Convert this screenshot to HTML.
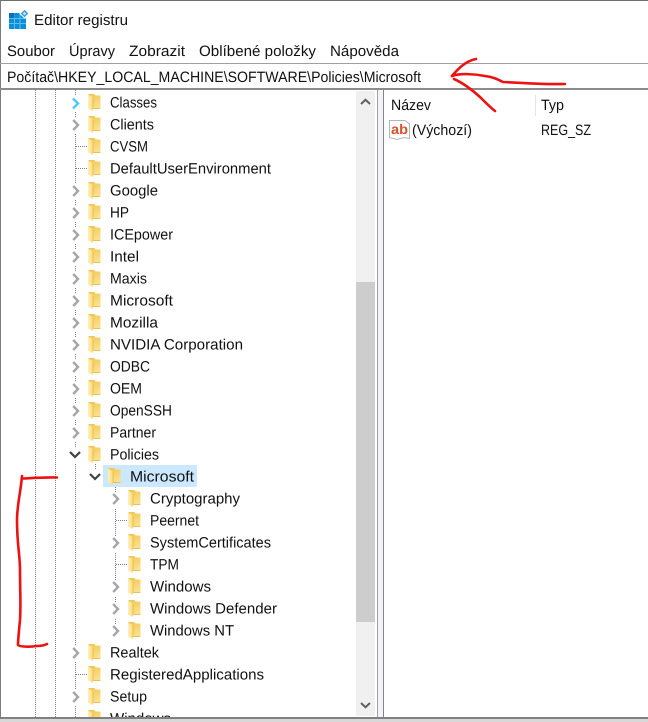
<!DOCTYPE html>
<html><head><meta charset="utf-8"><style>
html,body{margin:0;padding:0;background:#fff;width:648px;height:722px;overflow:hidden}
svg{display:block}
text{font-family:"Liberation Sans",sans-serif;font-size:15px;fill:#111;text-rendering:geometricPrecision}
</style></head><body>
<svg width="648" height="722" viewBox="0 0 648 722" xmlns="http://www.w3.org/2000/svg">
<defs>
<linearGradient id="fg" x1="0" y1="0" x2="0.4" y2="1"><stop offset="0" stop-color="#f0c54e"/><stop offset="1" stop-color="#fbdf8a"/></linearGradient>
<linearGradient id="fl" x1="0" y1="0" x2="1" y2="0"><stop offset="0" stop-color="#fff0b8"/><stop offset="1" stop-color="#fbdc7e"/></linearGradient>
<symbol id="f" width="13" height="18" viewBox="0 0 13 18" overflow="visible">
<path d="M0.500 0H6.500L7.500 1.500H12.500V14.500H0.500Z" fill="url(#fg)"/>
<path d="M0 0.500L5 3.500V17L0 14.500Z" fill="url(#fl)"/>
<path d="M5 3.500V14.500H12.500" fill="none" stroke="#e4b640" stroke-width=".7"/>
</symbol>
<symbol id="cr" width="9" height="12" viewBox="0 0 9 12"><path d="M1.200 1L6 6L1.200 11" fill="none" stroke="#a6a6a6" stroke-width="2.400"/></symbol>
</defs>
<rect x="0" y="0" width="648" height="1" fill="#6e6e6e"/>
<rect x="0" y="0" width="1" height="718" fill="#7a7a7a"/>

<!-- title -->
<g>
<rect x="9" y="13" width="17" height="16" fill="#0a8fd8"/>
<path d="M9 18.500H26M9 23.500H26M14.500 13V29M20 13V29" stroke="#5cc0ef" stroke-width="1"/>
<rect x="9" y="13" width="5.500" height="5" fill="#0b6fc0"/>
<path d="M24.500 9L29 13.500L24.500 18L20 13.500Z" fill="#3f9ed8" stroke="#fff" stroke-width="1"/>
<circle cx="24.500" cy="13.500" r="1.300" fill="#d8f0fb"/>
</g>
<text x="34" y="25" textLength="94" lengthAdjust="spacingAndGlyphs">Editor registru</text>
<text x="7" y="56" textLength="48" lengthAdjust="spacingAndGlyphs">Soubor</text>
<text x="69" y="56" textLength="46" lengthAdjust="spacingAndGlyphs">Úpravy</text>
<text x="129" y="56" textLength="56" lengthAdjust="spacingAndGlyphs">Zobrazit</text>
<text x="199" y="56" textLength="117" lengthAdjust="spacingAndGlyphs">Oblíbené položky</text>
<text x="330" y="56" textLength="69" lengthAdjust="spacingAndGlyphs">Nápověda</text>

<!-- address -->
<rect x="0" y="63" width="648" height="1" fill="#a0a0a0"/>
<rect x="0" y="88" width="648" height="2" fill="#8c8c8c"/>
<text x="7" y="82" textLength="414" lengthAdjust="spacingAndGlyphs">Počítač\HKEY_LOCAL_MACHINE\SOFTWARE\Policies\Microsoft</text>

<!-- dotted tree lines -->
<g stroke="#7f7f7f" stroke-width="1" stroke-dasharray="1 1" fill="none" shape-rendering="crispEdges">
<path d="M35.500 90V717M55.500 90V717M75.500 90V717"/>
<path d="M95.500 464V476M115.500 487V630"/>
<path d="M76 146.500H87M76 168.500H87M76 674.500H87M116 520.500H127M116 564.500H127"/>
</g>

<!-- white gaps behind chevrons -->
<g fill="#fff">
<rect x="70" y="96" width="12" height="16"/><rect x="70" y="118" width="12" height="16"/>
<rect x="70" y="184" width="12" height="16"/><rect x="70" y="206" width="12" height="16"/>
<rect x="70" y="228" width="12" height="16"/><rect x="70" y="250" width="12" height="16"/>
<rect x="70" y="272" width="12" height="16"/><rect x="70" y="294" width="12" height="16"/>
<rect x="70" y="316" width="12" height="16"/><rect x="70" y="338" width="12" height="16"/>
<rect x="70" y="360" width="12" height="16"/><rect x="70" y="382" width="12" height="16"/>
<rect x="70" y="404" width="12" height="16"/><rect x="70" y="426" width="12" height="16"/>
<rect x="70" y="448" width="12" height="16"/><rect x="70" y="646" width="12" height="16"/>
<rect x="70" y="690" width="12" height="16"/>
<rect x="90" y="470" width="12" height="16"/>
<rect x="110" y="492" width="12" height="16"/><rect x="110" y="536" width="12" height="16"/>
<rect x="110" y="580" width="12" height="16"/><rect x="110" y="602" width="12" height="16"/>
<rect x="110" y="624" width="12" height="16"/>
</g>

<!-- selection -->
<rect x="103" y="465" width="94" height="22" fill="#cce8ff"/>

<!-- chevrons -->
<path d="M73 98.500L78 103.500L73 108.500" fill="none" stroke="#4dc8f5" stroke-width="2.400"/>
<use href="#cr" x="72" y="119"/><use href="#cr" x="72" y="185"/><use href="#cr" x="72" y="207"/>
<use href="#cr" x="72" y="229"/><use href="#cr" x="72" y="251"/><use href="#cr" x="72" y="273"/>
<use href="#cr" x="72" y="295"/><use href="#cr" x="72" y="317"/><use href="#cr" x="72" y="339"/>
<use href="#cr" x="72" y="361"/><use href="#cr" x="72" y="383"/><use href="#cr" x="72" y="405"/>
<use href="#cr" x="72" y="427"/><use href="#cr" x="72" y="647"/><use href="#cr" x="72" y="691"/>
<use href="#cr" x="112" y="493"/><use href="#cr" x="112" y="537"/><use href="#cr" x="112" y="581"/>
<use href="#cr" x="112" y="603"/><use href="#cr" x="112" y="625"/>
<path d="M70 452L75 457L80 452" fill="none" stroke="#404040" stroke-width="2.200"/>
<path d="M90 474L95 479L100 474" fill="none" stroke="#404040" stroke-width="2.200"/>

<!-- folders -->
<use href="#f" x="88" y="94"/><use href="#f" x="88" y="116"/><use href="#f" x="88" y="138"/>
<use href="#f" x="88" y="160"/><use href="#f" x="88" y="182"/><use href="#f" x="88" y="204"/>
<use href="#f" x="88" y="226"/><use href="#f" x="88" y="248"/><use href="#f" x="88" y="270"/>
<use href="#f" x="88" y="292"/><use href="#f" x="88" y="314"/><use href="#f" x="88" y="336"/>
<use href="#f" x="88" y="358"/><use href="#f" x="88" y="380"/><use href="#f" x="88" y="402"/>
<use href="#f" x="88" y="424"/><use href="#f" x="88" y="446"/>
<use href="#f" x="108" y="468"/>
<use href="#f" x="128" y="490"/><use href="#f" x="128" y="512"/><use href="#f" x="128" y="534"/>
<use href="#f" x="128" y="556"/><use href="#f" x="128" y="578"/><use href="#f" x="128" y="600"/>
<use href="#f" x="128" y="622"/>
<use href="#f" x="88" y="644"/><use href="#f" x="88" y="666"/><use href="#f" x="88" y="688"/>
<use href="#f" x="88" y="710"/>

<!-- tree labels -->
<text x="110" y="107.500" textLength="47" lengthAdjust="spacingAndGlyphs">Classes</text>
<text x="110" y="129.500" textLength="44" lengthAdjust="spacingAndGlyphs">Clients</text>
<text x="110" y="151.500" textLength="38" lengthAdjust="spacingAndGlyphs">CVSM</text>
<text x="110" y="173.500" textLength="161" lengthAdjust="spacingAndGlyphs">DefaultUserEnvironment</text>
<text x="110" y="195.500" textLength="48" lengthAdjust="spacingAndGlyphs">Google</text>
<text x="110" y="217.500" textLength="19" lengthAdjust="spacingAndGlyphs">HP</text>
<text x="110" y="239.500" textLength="63" lengthAdjust="spacingAndGlyphs">ICEpower</text>
<text x="110" y="261.500" textLength="29" lengthAdjust="spacingAndGlyphs">Intel</text>
<text x="110" y="283.500" textLength="37" lengthAdjust="spacingAndGlyphs">Maxis</text>
<text x="110" y="305.500" textLength="63" lengthAdjust="spacingAndGlyphs">Microsoft</text>
<text x="110" y="327.500" textLength="48" lengthAdjust="spacingAndGlyphs">Mozilla</text>
<text x="110" y="349.500" textLength="133" lengthAdjust="spacingAndGlyphs">NVIDIA Corporation</text>
<text x="110" y="371.500" textLength="40" lengthAdjust="spacingAndGlyphs">ODBC</text>
<text x="110" y="393.500" textLength="32" lengthAdjust="spacingAndGlyphs">OEM</text>
<text x="110" y="415.500" textLength="62" lengthAdjust="spacingAndGlyphs">OpenSSH</text>
<text x="110" y="437.500" textLength="46" lengthAdjust="spacingAndGlyphs">Partner</text>
<text x="110" y="459.500" textLength="49" lengthAdjust="spacingAndGlyphs">Policies</text>
<text x="130" y="481.500" textLength="64" lengthAdjust="spacingAndGlyphs">Microsoft</text>
<text x="150" y="503.500" textLength="90" lengthAdjust="spacingAndGlyphs">Cryptography</text>
<text x="150" y="525.500" textLength="49" lengthAdjust="spacingAndGlyphs">Peernet</text>
<text x="150" y="547.500" textLength="121" lengthAdjust="spacingAndGlyphs">SystemCertificates</text>
<text x="150" y="569.500" textLength="29" lengthAdjust="spacingAndGlyphs">TPM</text>
<text x="150" y="591.500" textLength="61" lengthAdjust="spacingAndGlyphs">Windows</text>
<text x="150" y="613.500" textLength="127" lengthAdjust="spacingAndGlyphs">Windows Defender</text>
<text x="150" y="635.500" textLength="84" lengthAdjust="spacingAndGlyphs">Windows NT</text>
<text x="110" y="657.500" textLength="49" lengthAdjust="spacingAndGlyphs">Realtek</text>
<text x="110" y="679.500" textLength="154" lengthAdjust="spacingAndGlyphs">RegisteredApplications</text>
<text x="110" y="701.500" textLength="37" lengthAdjust="spacingAndGlyphs">Setup</text>
<text x="110" y="723.500" textLength="61" lengthAdjust="spacingAndGlyphs">Windows</text>

<!-- scrollbar -->
<rect x="356" y="91" width="19" height="625" fill="#f0f0f0"/>
<rect x="356" y="282" width="19" height="340" fill="#cdcdcd"/>
<path d="M361 104L365.500 99.800L370 104" fill="none" stroke="#606060" stroke-width="2"/>
<path d="M361 703L365.500 707.200L370 703" fill="none" stroke="#606060" stroke-width="2"/>

<!-- splitter -->
<rect x="377" y="90" width="6" height="627" fill="#f4f4f8"/>
<rect x="377" y="90" width="1" height="627" fill="#a0a0a8"/>
<rect x="383" y="90" width="1" height="627" fill="#85858c"/>

<!-- right pane -->
<text x="391" y="110" textLength="40" lengthAdjust="spacingAndGlyphs">Název</text>
<text x="541" y="110" textLength="23" lengthAdjust="spacingAndGlyphs">Typ</text>
<rect x="535" y="95" width="1" height="21" fill="#e5e5e5"/>
<path d="M389.500 120.500H405L409.500 124V138.500L404 137.500L397 139.500L389.500 137.500Z" fill="#fff" stroke="#b5b5b5"/>
<text x="391" y="134" textLength="17" lengthAdjust="spacingAndGlyphs" style="font-size:14px;font-weight:bold;fill:#d9532c">ab</text>
<text x="412" y="135" textLength="60" lengthAdjust="spacingAndGlyphs">(Výchozí)</text>
<text x="541" y="135" textLength="50" lengthAdjust="spacingAndGlyphs">REG_SZ</text>

<!-- bottom edge -->
<rect x="0" y="717" width="648" height="5" fill="#fff"/>
<rect x="0" y="717" width="648" height="2" fill="#808080"/>
<rect x="0" y="719" width="648" height="3" fill="#d8d8d8"/>

<!-- red annotations -->
<g fill="none" stroke="#ee1111" stroke-linecap="round" stroke-linejoin="round" stroke-width="2.600">
<path d="M565 84C550 84.500 530 83.500 503 82C497 79 493 77 485 76C475 74 460 73 452 76"/>
<path d="M452 76C457 70 465 61 476 59"/>
<path d="M454 79C463 83 470 88 480 97C486 103 491 108 495 111"/>
<path d="M57 477.500C45 477 33 478 23 478.500M22 476C21 490 17 505 17 520C17 545 20 555 20 570C20 590 21 605 20 620C19 630 18 640 18 645C20 647 30 647 37 646C41 646 45 645 47 644"/>
</g>
</svg>
</body></html>
